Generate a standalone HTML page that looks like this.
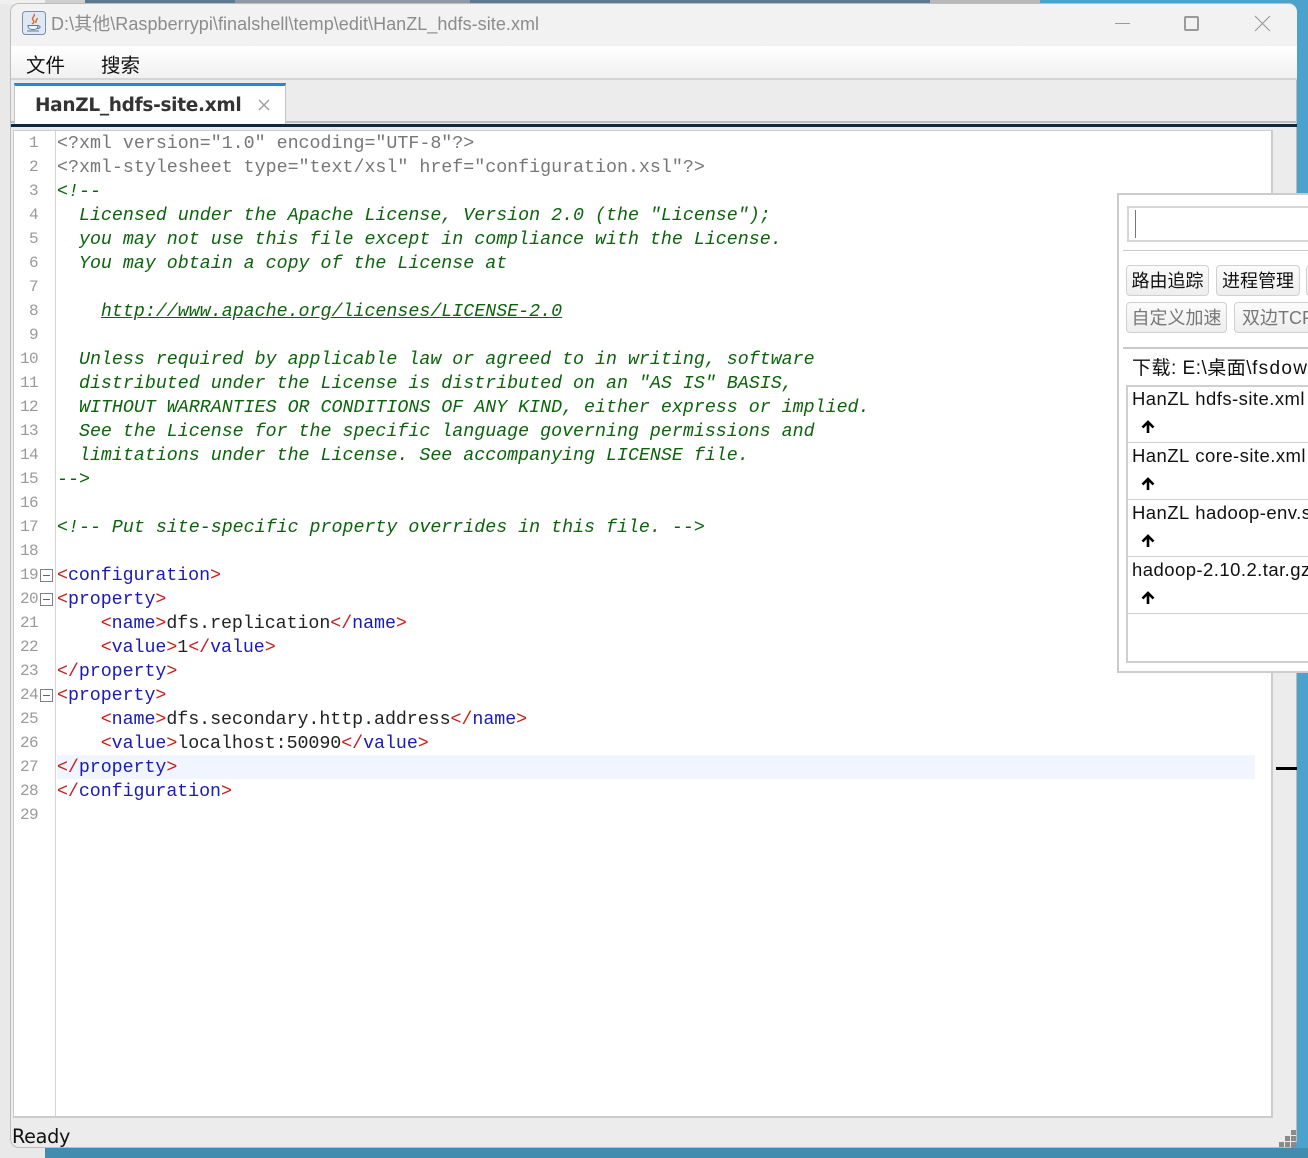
<!DOCTYPE html>
<html lang="zh"><head><meta charset="utf-8"><title>HanZL_hdfs-site.xml</title>
<style>
html,body{margin:0;padding:0}
body{width:1308px;height:1158px;position:relative;overflow:hidden;background:#4ba3cd;font-family:"Liberation Sans","Noto Sans CJK SC",sans-serif}
.a{position:absolute}
#win{left:10px;top:3px;width:1287px;height:1145px;background:#ececec;border-radius:9px;overflow:hidden;box-shadow:0 0 0 1px #bcbcbc inset}
.l{position:absolute;left:57px;height:24px;font:18.31px/24px "Liberation Mono",monospace;white-space:pre;color:#777;margin-top:2px}
.t{letter-spacing:-.05px}
.n{position:absolute;left:14px;width:24px;text-align:right;height:24px;font:16px/24px "Liberation Mono",monospace;color:#999;letter-spacing:-.6px;margin-top:1px}
.g{color:#0a640a;font-style:italic}
.r{color:#c81e1e}.b{color:#1a1ab4}.k{color:#222}
.f{position:absolute;left:40px;width:13px;height:13px;border:1px solid #808080;background:#fff;box-sizing:border-box;margin-top:-1px}
.f:after{content:"";position:absolute;left:2px;top:5px;width:7px;height:1px;background:#666}
.btn{position:absolute;height:31px;box-sizing:border-box;border:1px solid #d0d0d0;border-radius:4px;background:linear-gradient(#fbfbfb,#eeeeee);font-size:18px;line-height:30px;white-space:nowrap;overflow:hidden;text-align:center;color:#111}
.row{position:absolute;left:1132px;font-size:18.5px;line-height:24px;color:#111;white-space:pre;letter-spacing:.45px;word-spacing:-2.5px;margin-top:0}
.sep{position:absolute;left:1127px;width:181px;height:1px;background:#cfcfcf}
.ar{position:absolute;left:1141px;width:14px;height:14px}
</style></head><body>
<div class="a" style="left:0;top:0;width:45px;height:1158px;background:#e9e9e9"></div>
<div class="a" style="left:0;top:0;width:1040px;height:4px;background:#5d7990"></div>
<div class="a" style="left:235px;top:0;width:235px;height:4px;background:#8d9aa6"></div>
<div class="a" style="left:45px;top:0;width:40px;height:4px;background:#cfcfcf"></div>
<div class="a" style="left:930px;top:0;width:110px;height:4px;background:#b8b8b8"></div>
<div class="a" style="left:45px;top:1148px;width:1263px;height:10px;background:#428cb0"></div>
<div class="a" style="left:0;top:0;width:45px;height:4px;background:#f0f0f0"></div>

<div class="a" id="win"></div>
<div class="a" style="left:11px;top:4px;width:1286px;height:42px;background:#f2f2f2;border-radius:8px 8px 0 0"></div>
<svg class="a" style="left:22px;top:11px" width="24" height="24" viewBox="0 0 24 24"><rect x=".5" y=".5" width="23" height="23" rx="3" fill="#dfe8f3" stroke="#7b8fa8"/><path d="M6 14.500c0 3 1.500 4 5 4s5-1 5-4z" fill="#f4f4f8" stroke="#5a7aa0"/><path d="M16 15c3-.5 3 2.500-1 2.500M5 20h12" fill="none" stroke="#5a7aa0"/><path d="M12 3c2 2-3 3-1 6s0 3-1 4M15 7c1 1-2 2-1 5" fill="none" stroke="#d8702a" stroke-width="1.500"/></svg>
<div class="a" style="left:51px;top:12px;font-size:18px;line-height:24px;color:#8c8c8c;white-space:pre;letter-spacing:.05px">D:\其他\Raspberrypi\finalshell\temp\edit\HanZL_hdfs-site.xml</div>
<div class="a" style="left:1115px;top:23px;width:15px;height:1px;background:#999"></div>
<div class="a" style="left:1184px;top:16px;width:15px;height:15px;box-sizing:border-box;border:2px solid #9a9a9a;border-radius:2px"></div>
<svg class="a" style="left:1254px;top:15px" width="17" height="17"><path d="M1 1L16 16M16 1L1 16" stroke="#999" stroke-width="1.100"/></svg>

<div class="a" style="left:11px;top:46px;width:1286px;height:33px;background:linear-gradient(#ffffff,#f0f0f0)"></div>
<div class="a" style="left:11px;top:78px;width:1286px;height:2px;background:#d4d4d4"></div>
<div class="a" style="left:26px;top:53px;font-size:19.5px;line-height:26px;color:#111">文件</div>
<div class="a" style="left:101px;top:53px;font-size:19.5px;line-height:26px;color:#111">搜索</div>

<div class="a" style="left:11px;top:121px;width:1286px;height:2px;background:#bdbdbd"></div>
<div class="a" style="left:11px;top:124px;width:1286px;height:3px;background:#0c2a42"></div>
<div class="a" style="left:14px;top:83px;width:272px;height:41px;box-sizing:border-box;background:#fff;border-top:3px solid #1e88e5;border-left:1px solid #c4c4c4;border-right:1px solid #c4c4c4"></div>
<div class="a" style="left:35px;top:93px;font-size:18.5px;font-weight:bold;line-height:26px;color:#333;white-space:pre;font-family:'DejaVu Sans',sans-serif;letter-spacing:-.3px">HanZL_hdfs-site.xml</div>
<svg class="a" style="left:258px;top:99px" width="12" height="12"><path d="M1 1L11 11M11 1L1 11" stroke="#999" stroke-width="1.300"/></svg>

<div class="a" style="left:13px;top:130px;width:1260px;height:988px;box-sizing:border-box;background:#fff;border:1px solid #cccccc;border-width:1px 2px 2px 1px"></div>
<div class="a" style="left:55px;top:131px;width:1px;height:986px;background:#d4d4d4"></div>
<div class="a" style="left:57px;top:755px;width:1198px;height:24px;background:#f1f5ff"></div>
<div class="a" style="left:1276px;top:767px;width:21px;height:3px;background:#000"></div>

<div class="n" style="top:130px">1</div><div class="l" style="top:130px">&lt;?xml version="1.0" encoding="UTF-8"?&gt;</div>
<div class="n" style="top:154px">2</div><div class="l" style="top:154px">&lt;?xml-stylesheet type="text/xsl" href="configuration.xsl"?&gt;</div>
<div class="n" style="top:178px">3</div><div class="l g" style="top:178px">&lt;!--</div>
<div class="n" style="top:202px">4</div><div class="l g" style="top:202px">  Licensed under the Apache License, Version 2.0 (the "License");</div>
<div class="n" style="top:226px">5</div><div class="l g" style="top:226px">  you may not use this file except in compliance with the License.</div>
<div class="n" style="top:250px">6</div><div class="l g" style="top:250px">  You may obtain a copy of the License at</div>
<div class="n" style="top:274px">7</div>
<div class="n" style="top:298px">8</div><div class="l g" style="top:298px">    <u>http://www.apache.org/licenses/LICENSE-2.0</u></div>
<div class="n" style="top:322px">9</div>
<div class="n" style="top:346px">10</div><div class="l g" style="top:346px">  Unless required by applicable law or agreed to in writing, software</div>
<div class="n" style="top:370px">11</div><div class="l g" style="top:370px">  distributed under the License is distributed on an "AS IS" BASIS,</div>
<div class="n" style="top:394px">12</div><div class="l g" style="top:394px">  WITHOUT WARRANTIES OR CONDITIONS OF ANY KIND, either express or implied.</div>
<div class="n" style="top:418px">13</div><div class="l g" style="top:418px">  See the License for the specific language governing permissions and</div>
<div class="n" style="top:442px">14</div><div class="l g" style="top:442px">  limitations under the License. See accompanying LICENSE file.</div>
<div class="n" style="top:466px">15</div><div class="l g" style="top:466px">--&gt;</div>
<div class="n" style="top:490px">16</div>
<div class="n" style="top:514px">17</div><div class="l g" style="top:514px">&lt;!-- Put site-specific property overrides in this file. --&gt;</div>
<div class="n" style="top:538px">18</div>
<div class="n" style="top:562px">19</div><div class="f" style="top:570px"></div><div class="l t" style="top:562px"><span class="r">&lt;</span><span class="b">configuration</span><span class="r">&gt;</span></div>
<div class="n" style="top:586px">20</div><div class="f" style="top:594px"></div><div class="l t" style="top:586px"><span class="r">&lt;</span><span class="b">property</span><span class="r">&gt;</span></div>
<div class="n" style="top:610px">21</div><div class="l t" style="top:610px">    <span class="r">&lt;</span><span class="b">name</span><span class="r">&gt;</span><span class="k">dfs.replication</span><span class="r">&lt;/</span><span class="b">name</span><span class="r">&gt;</span></div>
<div class="n" style="top:634px">22</div><div class="l t" style="top:634px">    <span class="r">&lt;</span><span class="b">value</span><span class="r">&gt;</span><span class="k">1</span><span class="r">&lt;/</span><span class="b">value</span><span class="r">&gt;</span></div>
<div class="n" style="top:658px">23</div><div class="l t" style="top:658px"><span class="r">&lt;/</span><span class="b">property</span><span class="r">&gt;</span></div>
<div class="n" style="top:682px">24</div><div class="f" style="top:690px"></div><div class="l t" style="top:682px"><span class="r">&lt;</span><span class="b">property</span><span class="r">&gt;</span></div>
<div class="n" style="top:706px">25</div><div class="l t" style="top:706px">    <span class="r">&lt;</span><span class="b">name</span><span class="r">&gt;</span><span class="k">dfs.secondary.http.address</span><span class="r">&lt;/</span><span class="b">name</span><span class="r">&gt;</span></div>
<div class="n" style="top:730px">26</div><div class="l t" style="top:730px">    <span class="r">&lt;</span><span class="b">value</span><span class="r">&gt;</span><span class="k">localhost:50090</span><span class="r">&lt;/</span><span class="b">value</span><span class="r">&gt;</span></div>
<div class="n" style="top:754px">27</div><div class="l t" style="top:754px"><span class="r">&lt;/</span><span class="b">property</span><span class="r">&gt;</span></div>
<div class="n" style="top:778px">28</div><div class="l t" style="top:778px"><span class="r">&lt;/</span><span class="b">configuration</span><span class="r">&gt;</span></div>
<div class="n" style="top:802px">29</div>

<div class="a" style="left:12px;top:1124px;font:19.2px/26px 'DejaVu Sans',sans-serif;color:#111;letter-spacing:-.3px">Ready</div>
<svg class="a" style="left:1279px;top:1130px" width="18" height="18"><g fill="#8a8a8a"><rect x="12" y="0" width="5" height="5"/><rect x="6" y="6" width="5" height="5"/><rect x="12" y="6" width="5" height="5"/><rect x="0" y="12" width="5" height="5"/><rect x="6" y="12" width="5" height="5"/><rect x="12" y="12" width="5" height="5"/></g></svg>

<!-- floating panel -->
<div class="a" style="left:1117px;top:193px;width:191px;height:480px;box-sizing:border-box;background:#fff;border:solid #cccccc;border-width:2px 0 2px 2px"></div>
<div class="a" style="left:1127px;top:206px;width:181px;height:36px;box-sizing:border-box;background:#fff;border:solid #d6d6d6;border-width:2px 0 2px 2px"></div>
<div class="a" style="left:1135px;top:210px;width:1px;height:28px;background:#777"></div>
<div class="a" style="left:1123px;top:250px;width:185px;height:1px;background:#c9c9c9"></div>
<div class="btn" style="left:1126px;top:265px;width:83px">路由追踪</div>
<div class="btn" style="left:1216px;top:265px;width:84px">进程管理</div>
<div class="btn" style="left:1306px;top:265px;width:10px"></div>
<div class="btn" style="left:1126px;top:302px;width:101px;color:#777">自定义加速</div>
<div class="btn" style="left:1234px;top:302px;width:90px;color:#777;text-align:left;padding-left:7px">双边TCP</div>
<div class="a" style="left:1123px;top:347px;width:185px;height:2px;background:#c9c9c9"></div>
<div class="a" style="left:1132px;top:356px;font-size:19px;line-height:26px;color:#111;white-space:pre;letter-spacing:.5px">下载: E:\桌面\<span style="letter-spacing:1.3px">fsdow</span></div>
<div class="a" style="left:1126px;top:385px;width:182px;height:278px;box-sizing:border-box;background:#fff;border:solid #cfcfcf;border-width:2px 0 2px 2px"></div>
<div class="row" style="top:387px">HanZL  hdfs-site.xml</div>
<div class="sep" style="top:442px"></div>
<div class="row" style="top:444px">HanZL  core-site.xml</div>
<div class="sep" style="top:499px"></div>
<div class="row" style="top:501px">HanZL  hadoop-env.s</div>
<div class="sep" style="top:556px"></div>
<div class="row" style="top:558px">hadoop-2.10.2.tar.gz</div>
<div class="sep" style="top:613px"></div>
<svg class="ar" style="top:420px" viewBox="0 0 14 14"><path d="M7 13V3M1.500 7.500L7 2l5.500 5.500" fill="none" stroke="#000" stroke-width="2.600"/></svg>
<svg class="ar" style="top:477px" viewBox="0 0 14 14"><path d="M7 13V3M1.500 7.500L7 2l5.500 5.500" fill="none" stroke="#000" stroke-width="2.600"/></svg>
<svg class="ar" style="top:534px" viewBox="0 0 14 14"><path d="M7 13V3M1.500 7.500L7 2l5.500 5.500" fill="none" stroke="#000" stroke-width="2.600"/></svg>
<svg class="ar" style="top:591px" viewBox="0 0 14 14"><path d="M7 13V3M1.500 7.500L7 2l5.500 5.500" fill="none" stroke="#000" stroke-width="2.600"/></svg>
</body></html>
